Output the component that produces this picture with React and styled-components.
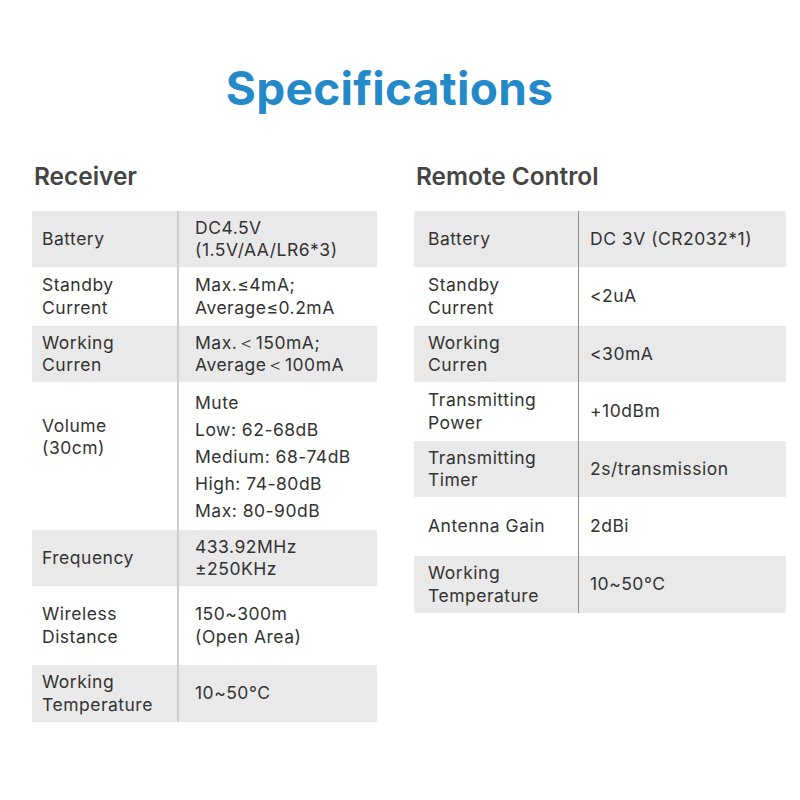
import React from "react";
import styled, { createGlobalStyle } from "styled-components";

const Global = createGlobalStyle`
  html, body { margin: 0; padding: 0; background: #ffffff; }
  body { font-family: Inter, "Noto Sans", "Liberation Sans", sans-serif; }
`;

const Page = styled.div`
  width: 800px;
  height: 800px;
  box-sizing: border-box;
  padding-top: 56px;
  background: #fff;
`;

const Title = styled.h1`
  margin: 0;
  text-align: center;
  font-size: 46px;
  font-weight: 700;
  line-height: 64px;
  color: #2389c9;
  letter-spacing: 0.3px;
  padding-right: 21px;
`;

const Columns = styled.div`
  display: flex;
  gap: 37px;
  padding-left: 32px;
  margin-top: 40px;
`;

const Column = styled.section`
  width: ${(p) => p.$width}px;
  display: flex;
  flex-direction: column;
`;

const Heading = styled.h2`
  margin: 0 0 0 2px;
  font-size: 24.4px;
  font-weight: 600;
  line-height: 32px;
  color: #454545;
  height: 51px;
`;

const Table = styled.div`
  display: flex;
  flex-direction: column;
`;

const Row = styled.div`
  display: grid;
  grid-template-columns: ${(p) => p.$labelWidth}px 1fr;
  height: ${(p) => p.$h}px;
  background: ${(p) => (p.$shade ? "#e9e9e9" : "#ffffff")};
`;

const Label = styled.div`
  display: flex;
  align-items: center;
  padding-left: ${(p) => p.$pad}px;
  padding-bottom: ${(p) => p.$raise || 0}px;
  border-right: ${(p) => p.$divider};
  font-size: 17.5px;
  letter-spacing: 0.5px;
  line-height: 22.5px;
  color: #333;
  white-space: pre-line;
`;

const Value = styled.div`
  display: flex;
  flex-direction: column;
  justify-content: center;
  padding-left: ${(p) => p.$pad}px;
  font-size: 17.5px;
  letter-spacing: 0.5px;
  line-height: ${(p) => p.$lh || 22.5}px;
  color: #333;
`;

const receiver = [
  { l: "Battery", v: ["DC4.5V", "(1.5V/AA/LR6*3)"], h: 56 },
  { l: "Standby\nCurrent", v: ["Max.≤4mA;", "Average≤0.2mA"], h: 59 },
  { l: "Working\nCurren", v: ["Max.＜150mA;", "Average＜100mA"], h: 56 },
  {
    l: "Volume\n(30cm)",
    v: ["Mute", "Low: 62-68dB", "Medium: 68-74dB", "High: 74-80dB", "Max: 80-90dB"],
    h: 148,
    lh: 27,
    raise: 38,
  },
  { l: "Frequency", v: ["433.92MHz", "±250KHz"], h: 56 },
  { l: "Wireless\nDistance", v: ["150~300m", "(Open Area)"], h: 79 },
  { l: "Working\nTemperature", v: ["10~50°C"], h: 57 },
];

const remote = [
  { l: "Battery", v: ["DC 3V (CR2032*1)"], h: 56 },
  { l: "Standby\nCurrent", v: ["<2uA"], h: 59 },
  { l: "Working\nCurren", v: ["<30mA"], h: 56 },
  { l: "Transmitting\nPower", v: ["+10dBm"], h: 59 },
  { l: "Transmitting\nTimer", v: ["2s/transmission"], h: 56 },
  { l: "Antenna Gain", v: ["2dBi"], h: 59 },
  { l: "Working\nTemperature", v: ["10~50°C"], h: 57 },
];

function SpecTable({ rows, labelWidth, labelPad, valuePad, divider }) {
  return (
    <Table>
      {rows.map((r, i) => (
        <Row key={i} $h={r.h} $shade={i % 2 === 0} $labelWidth={labelWidth}>
          <Label $pad={labelPad} $divider={divider} $raise={r.raise}>
            {r.l}
          </Label>
          <Value $pad={valuePad} $lh={r.lh}>
            {r.v.map((line, j) => (
              <span key={j}>{line}</span>
            ))}
          </Value>
        </Row>
      ))}
    </Table>
  );
}

export default function App() {
  return (
    <>
      <Global />
      <Page>
        <Title>Specifications</Title>
        <Columns>
          <Column $width={345}>
            <Heading>Receiver</Heading>
            <SpecTable
              rows={receiver}
              labelWidth={147}
              labelPad={10}
              valuePad={16}
              divider="2px solid #cdcdcd"
            />
          </Column>
          <Column $width={372}>
            <Heading>Remote Control</Heading>
            <SpecTable
              rows={remote}
              labelWidth={165}
              labelPad={14}
              valuePad={11}
              divider="1px solid #8c8c8c"
            />
          </Column>
        </Columns>
      </Page>
    </>
  );
}
